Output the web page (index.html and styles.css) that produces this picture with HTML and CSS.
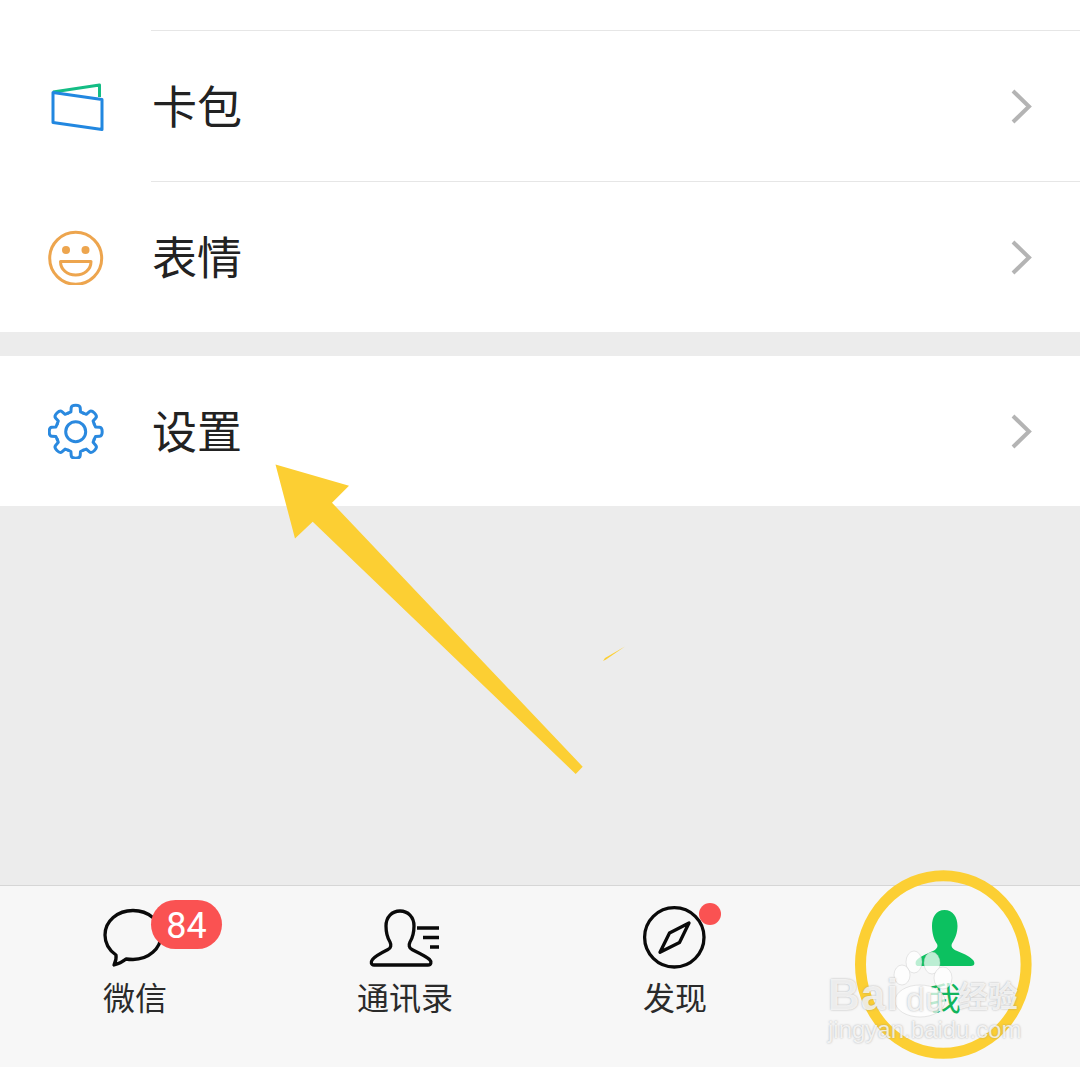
FILE: index.html
```html
<!DOCTYPE html>
<html lang="zh-CN">
<head>
<meta charset="utf-8">
<title>我</title>
<link rel="stylesheet" href="styles.css">
</head>
<body>
<div class="page">
  <section class="group">
    <div class="top-gap"></div>
    <div class="sep"></div>
    <div class="row">
      <svg class="icon" viewBox="48 78 56 56"><path class="s-green" d="M53 92 L99.500 85 V97"/><path class="s-blue" d="M53 92.500 L102 99.500 V129.500 L53 122.500Z"/></svg>
      <span class="label">卡包</span>
      <svg class="chev" viewBox="0 0 24 36"><path d="M3 3 L19 18.500 L3 34"/></svg>
    </div>
    <div class="sep"></div>
    <div class="row">
      <svg class="icon" viewBox="48 229 56 56"><circle class="s-orange" cx="75.700" cy="258.300" r="26"/><circle class="f-orange" cx="66" cy="250" r="4"/><circle class="f-orange" cx="85.500" cy="250" r="4"/><path class="s-orange" d="M60.500 261.500 H91 C91 270 84 275 75.700 275 C67.500 275 60.500 270 60.500 261.500Z"/></svg>
      <span class="label">表情</span>
      <svg class="chev" viewBox="0 0 24 36"><path d="M3 3 L19 18.500 L3 34"/></svg>
    </div>
  </section>
  <section class="group group-gap">
    <div class="row">
      <svg class="icon" viewBox="48 403 56 56">
        <defs><path id="tooth" d="M-7.650 -18.500 L-4.800 -19.800 L-4.500 -24 C-4.300 -26.500 -2 -26.500 0 -26.500 C2 -26.500 4.300 -26.500 4.500 -24 L4.800 -19.800 L7.650 -18.500"/></defs>
        <g class="s-gear" transform="translate(75.700 431.700)">
          <use href="#tooth"/><use href="#tooth" transform="rotate(45)"/><use href="#tooth" transform="rotate(90)"/><use href="#tooth" transform="rotate(135)"/><use href="#tooth" transform="rotate(180)"/><use href="#tooth" transform="rotate(225)"/><use href="#tooth" transform="rotate(270)"/><use href="#tooth" transform="rotate(315)"/>
          <circle r="10"/>
        </g>
      </svg>
      <span class="label">设置</span>
      <svg class="chev" viewBox="0 0 24 36"><path d="M3 3 L19 18.500 L3 34"/></svg>
    </div>
  </section>
  <div class="filler"></div>
  <nav class="tabbar">
    <div class="tab">
      <div class="tab-icon">
        <svg class="tab-svg" viewBox="105 907 60 62"><path class="s-black" d="M133 910.500 C117.500 910.500 105 921 105 935 C105 943.500 109.500 950.500 116 955 C116.500 958 115.500 962 114 965 C118.500 964 123 961.500 126 959 C128.300 959.400 130.600 959.500 133 959.500 C148.500 959.500 161 948.500 161 935 C161 921 148.500 910.500 133 910.500Z"/></svg>
        <span class="badge">84</span>
      </div>
      <span class="tab-label">微信</span>
    </div>
    <div class="tab">
      <div class="tab-icon">
        <svg class="tab-svg" viewBox="375 907 60 62"><path class="s-black" d="M374 965 H428 C431 965 432 962 429.500 959.500 C426 956 418 952.500 412 949.500 C409 948 408.500 945 410 942 C413 937 414 930 414 926 C414 917 408 911 400 911 C392 911 386 917 386 926 C386 930 387 937 390 942 C391.500 945 391 948 388 949.500 C382 952.500 375 956 372.500 959.500 C370.500 962 371 965 374 965Z"/><path class="s-black-b" d="M417 928 H439 M423 937.500 H439 M430 947 H439"/></svg>
      </div>
      <span class="tab-label">通讯录</span>
    </div>
    <div class="tab">
      <div class="tab-icon">
        <svg class="tab-svg" viewBox="645 907 60 62"><circle class="s-black" cx="674.300" cy="937.300" r="29.700"/><path class="s-black" d="M689 923 L679.500 942.500 L660 952.300 L669.500 933Z"/></svg>
        <span class="dot"></span>
      </div>
      <span class="tab-label">发现</span>
    </div>
    <div class="tab">
      <div class="tab-icon">
        <svg class="tab-svg" viewBox="915 907 60 62"><path class="f-green" d="M944.500 910 C936 910 932 917 932 926 C932 933 934 940 937 944 C938.500 947 936 949.500 933 951 C927 954 919 956.500 916 961 C915 964 916 966 918.500 966 H971 C974.500 966 975.500 963 973 960 C969 955.500 962 953 956 950.500 C953 949 950.500 947 952 943.500 C955 939 957.500 933 957.500 926 C957.500 917 953 910 944.500 910Z"/></svg>
      </div>
      <span class="tab-label tab-label-on">我</span>
    </div>
  </nav>
  <svg class="marks" viewBox="0 0 1080 1067">
    <path class="mark-fill" d="M275.500 464.500 L349 485.700 L332 502.700 L582.700 766.700 L575.700 774 L312.700 521.700 L295 538.500Z"/>
    <path class="mark-fill" d="M603 661 L605 658 L625 646.500 L606 659.500Z"/>
    <ellipse class="mark-ring" cx="943.300" cy="964.500" rx="82.800" ry="88.800"/>
    <g class="paw">
      <ellipse cx="914" cy="962" rx="8" ry="11"/>
      <ellipse cx="932" cy="963" rx="8" ry="11"/>
      <ellipse cx="902" cy="975" rx="8" ry="10"/>
      <ellipse cx="943" cy="978" rx="9" ry="11"/>
      <ellipse cx="920" cy="1001" rx="25" ry="16"/>
    </g>
  </svg>
  <div class="wm wm-bai">Bai</div>
  <div class="wm wm-du">du</div>
  <div class="wm wm-jy">经验</div>
  <div class="wm wm-url">jingyan.baidu.com</div>
</div>
</body>
</html>
```
FILE: styles.css
```css
* { box-sizing: border-box; }
html, body { margin: 0; padding: 0; }
body { width: 1080px; height: 1067px; overflow: hidden; background: #ececec; font-family: "Noto Sans CJK SC", "Noto Sans", sans-serif; }
.page { position: relative; width: 1080px; height: 1067px; display: flex; flex-direction: column; }
.group { background: #fff; }
.group-gap { margin-top: 24px; }
.top-gap { height: 30px; }
.sep { height: 1px; margin-left: 151px; background: #e6e6e6; }
.row { height: 150px; display: flex; align-items: center; padding-left: 48px; }
.icon { width: 56px; height: 56px; flex: none; }
.label { margin-left: 48px; margin-bottom: 4px; font-size: 45px; line-height: 1; color: #222; }
.chev { width: 24px; height: 36px; margin-left: auto; margin-right: 46px; flex: none; fill: none; stroke: #b4b4b4; stroke-width: 4; }
.s-green { fill: none; stroke: #14bd85; stroke-width: 3; stroke-linejoin: round; }
.s-blue { fill: none; stroke: #2187e0; stroke-width: 3; stroke-linejoin: round; }
.s-orange { fill: none; stroke: #eda54e; stroke-width: 3; stroke-linejoin: round; }
.f-orange { fill: #eda54e; }
.s-gear { fill: none; stroke: #2a89df; stroke-width: 3; stroke-linecap: round; stroke-linejoin: round; }
.filler { flex: 1; }
.tabbar { height: 182px; flex: none; background: #f7f7f7; border-top: 1px solid #d6d6d6; display: grid; grid-template-columns: repeat(4, 270px); }
.tab { display: flex; flex-direction: column; align-items: center; padding-top: 21px; }
.tab-icon { position: relative; width: 60px; height: 62px; }
.tab-svg { display: block; width: 60px; height: 62px; overflow: visible; }
.s-black { fill: none; stroke: #0a0a0a; stroke-width: 3.300; stroke-linejoin: round; }
.s-black-b { fill: none; stroke: #0a0a0a; stroke-width: 3.300; }
.f-green { fill: #0cc160; }
.tab-label { margin-top: 4px; font-size: 32px; line-height: 46px; color: #2a2a2a; }
.tab-label-on { color: #10b55c; }
.badge { position: absolute; left: 46px; top: -7px; width: 71px; height: 49px; border-radius: 24.500px; background: #fa5252; color: #fff; font-family: Roboto, "Noto Sans", sans-serif; font-size: 36px; line-height: 52px; text-align: center; }
.dot { position: absolute; left: 54px; top: -4px; width: 22px; height: 22px; border-radius: 50%; background: #fa5252; }
.marks { position: absolute; left: 0; top: 0; width: 1080px; height: 1067px; pointer-events: none; }
.mark-fill { fill: #fccf33; }
.mark-ring { fill: none; stroke: #fccf33; stroke-width: 11; }
.paw { fill: rgba(255, 255, 255, 0.72); stroke: rgba(190, 190, 190, 0.35); stroke-width: 1; }
.wm { position: absolute; color: rgba(255, 255, 255, 0.78); text-shadow: 0 0 2px rgba(130, 130, 130, 0.65); white-space: nowrap; line-height: 1; }
.wm-bai { left: 828px; top: 973px; font-family: "Liberation Sans", sans-serif; font-weight: 700; font-size: 44px; letter-spacing: 1px; }
.wm-du { left: 906px; top: 982px; font-family: "Liberation Sans", sans-serif; font-size: 34px; }
.wm-jy { left: 958px; top: 979px; font-size: 30px; font-weight: 700; }
.wm-url { left: 828px; top: 1018px; font-family: "Liberation Sans", sans-serif; font-size: 24px; }
```
